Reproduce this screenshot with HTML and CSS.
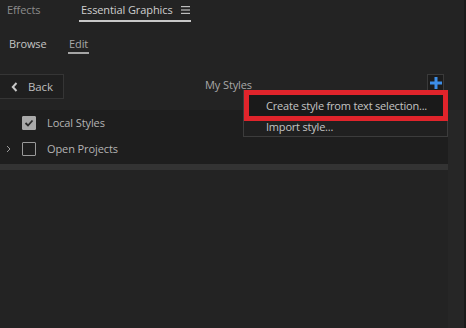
FILE: index.html
```
<!DOCTYPE html>
<html>
<head>
<meta charset="utf-8">
<link rel="stylesheet" href="styles.css">
</head>
<body>
<div class="page">
  <div class="main">
    <div class="tabs">
      <div class="tab dim">Effects</div>
      <div class="tab active">Essential Graphics
        <svg class="burger" width="9" height="8" viewBox="0 0 9 8"><rect x="0" y="0" width="9" height="1.2" fill="#bdbdbd"/><rect x="0" y="3.4" width="9" height="1.2" fill="#bdbdbd"/><rect x="0" y="6.8" width="9" height="1.2" fill="#bdbdbd"/></svg>
      </div>
    </div>
    <div class="subtabs">
      <div class="subtab">Browse</div>
      <div class="subtab sel">Edit</div>
    </div>
    <div class="toolbar">
      <div class="back">
        <svg width="7" height="10" viewBox="0 0 7 10"><path d="M5.5 1 L1.8 5 L5.5 9" fill="none" stroke="#c8c8c8" stroke-width="2"/></svg>
        <span>Back</span>
      </div>
      <div class="title">My Styles</div>
      <div class="plus">
        <svg width="12" height="12" viewBox="0 0 12 12"><rect x="4.5" y="0" width="3" height="12" fill="#3d8ee8"/><rect x="0" y="4.5" width="12" height="3" fill="#3d8ee8"/></svg>
      </div>
    </div>
    <div class="content">
      <div class="left">
        <div class="list">
          <div class="row">
            <span class="twisty"></span>
            <span class="check on"><svg width="10" height="8" viewBox="0 0 10 8"><path d="M1.5 4 L4 6.5 L8.5 1.5" fill="none" stroke="#2a2a2a" stroke-width="1.8"/></svg></span>
            <span class="label">Local Styles</span>
          </div>
          <div class="row">
            <span class="twisty"><svg width="5" height="8" viewBox="0 0 5 8"><path d="M1 1 L4 4 L1 7" fill="none" stroke="#9a9a9a" stroke-width="1"/></svg></span>
            <span class="check"></span>
            <span class="label">Open Projects</span>
          </div>
        </div>
        <div class="bar"></div>
      </div>
      <div class="track"></div>
    </div>
  </div>
  <div class="edge"></div>
  <div class="menu">
    <div class="item hl">Create style from text selection...</div>
    <div class="item">Import style...</div>
  </div>
</div>
</body>
</html>
```
FILE: styles.css
```
html, body { margin: 0; padding: 0; }
body {
  background: #232323;
  font-family: "Open Sans", "Noto Sans", sans-serif;
  font-size: 11px;
  letter-spacing: -0.1px;
  color: #b8b8b8;
  width: 466px;
  height: 328px;
  overflow: hidden;
}
.page { position: relative; display: flex; width: 466px; height: 328px; }
.main { flex: 1; display: flex; flex-direction: column; }
.edge { width: 2px; background: #1a1a1a; }
.tabs { display: flex; height: 22px; align-items: flex-start; }
.tab { height: 20px; line-height: 20px; box-sizing: border-box; }
.dim { color: #8c8c8c; margin-left: 7px; width: 72px; }
.active { color: #cfcfcf; border-bottom: 2px solid #c8c8c8; padding: 0 1px 0 2px; width: 112px; display: flex; align-items: center; justify-content: space-between; box-sizing: border-box; height: 22px; }
.subtabs { display: flex; height: 18px; margin-top: 14px; align-items: flex-start; }
.subtab { height: 18px; line-height: 16px; box-sizing: border-box; }
.subtab:first-child { margin-left: 9px; color: #c4c4c4; width: 59px; }
.sel { color: #a8a8a8; border-bottom: 2px solid #a5a5a5; padding: 0 1px; }
.toolbar { display: flex; align-items: flex-start; margin-top: 20px; height: 36px; }
.back { width: 64px; height: 25px; box-sizing: border-box; border: 1px solid #353535; border-left: none; background: #1f1f1f; display: flex; align-items: center; padding-left: 11px; gap: 10px; color: #bdbdbd; font-size: 11.5px; }
.title { flex: 1; text-align: center; color: #a8a8a8; margin-top: 3px; padding-right: 34px; }
.plus { width: 17px; height: 18px; box-sizing: border-box; border: 1px solid #3a3a3a; background: #1c1c1c; display: flex; align-items: center; justify-content: center; margin-right: 20px; }
.content { flex: 1; display: flex; }
.left { width: 448px; }
.list { background: #1e1e1e; height: 54px; padding-top: 0; box-sizing: border-box; }
.row { display: flex; align-items: center; height: 25px; }
.row + .row { height: 27px; }
.twisty { width: 22px; display: flex; justify-content: center; box-sizing: border-box; }
.twisty svg { margin-left: -6px; }
.check { width: 14px; height: 14px; box-sizing: border-box; border: 1.5px solid #9a9a9a; border-radius: 1px; display: flex; align-items: center; justify-content: center; }
.check.on { background: #a9a9a9; border-color: #a9a9a9; }
.label { margin-left: 11px; color: #b4b4b4; }
.bar { height: 6px; background: #333333; }
.track { flex: 1; background: #262626; }
.menu { position: absolute; left: 243px; top: 90px; width: 205px; height: 47px; box-sizing: border-box; border: 1px solid #3c3c3c; border-top: none; background: #202020; }
.item { height: 16px; line-height: 12px; padding-left: 22px; color: #c4c4c4; box-sizing: border-box; letter-spacing: -0.2px; }
.item.hl { height: 31px; line-height: 21px; border: 5px solid #e0242b; background: #1a1a1a; padding-left: 17px; width: 204px; margin-left: 0; }
```
